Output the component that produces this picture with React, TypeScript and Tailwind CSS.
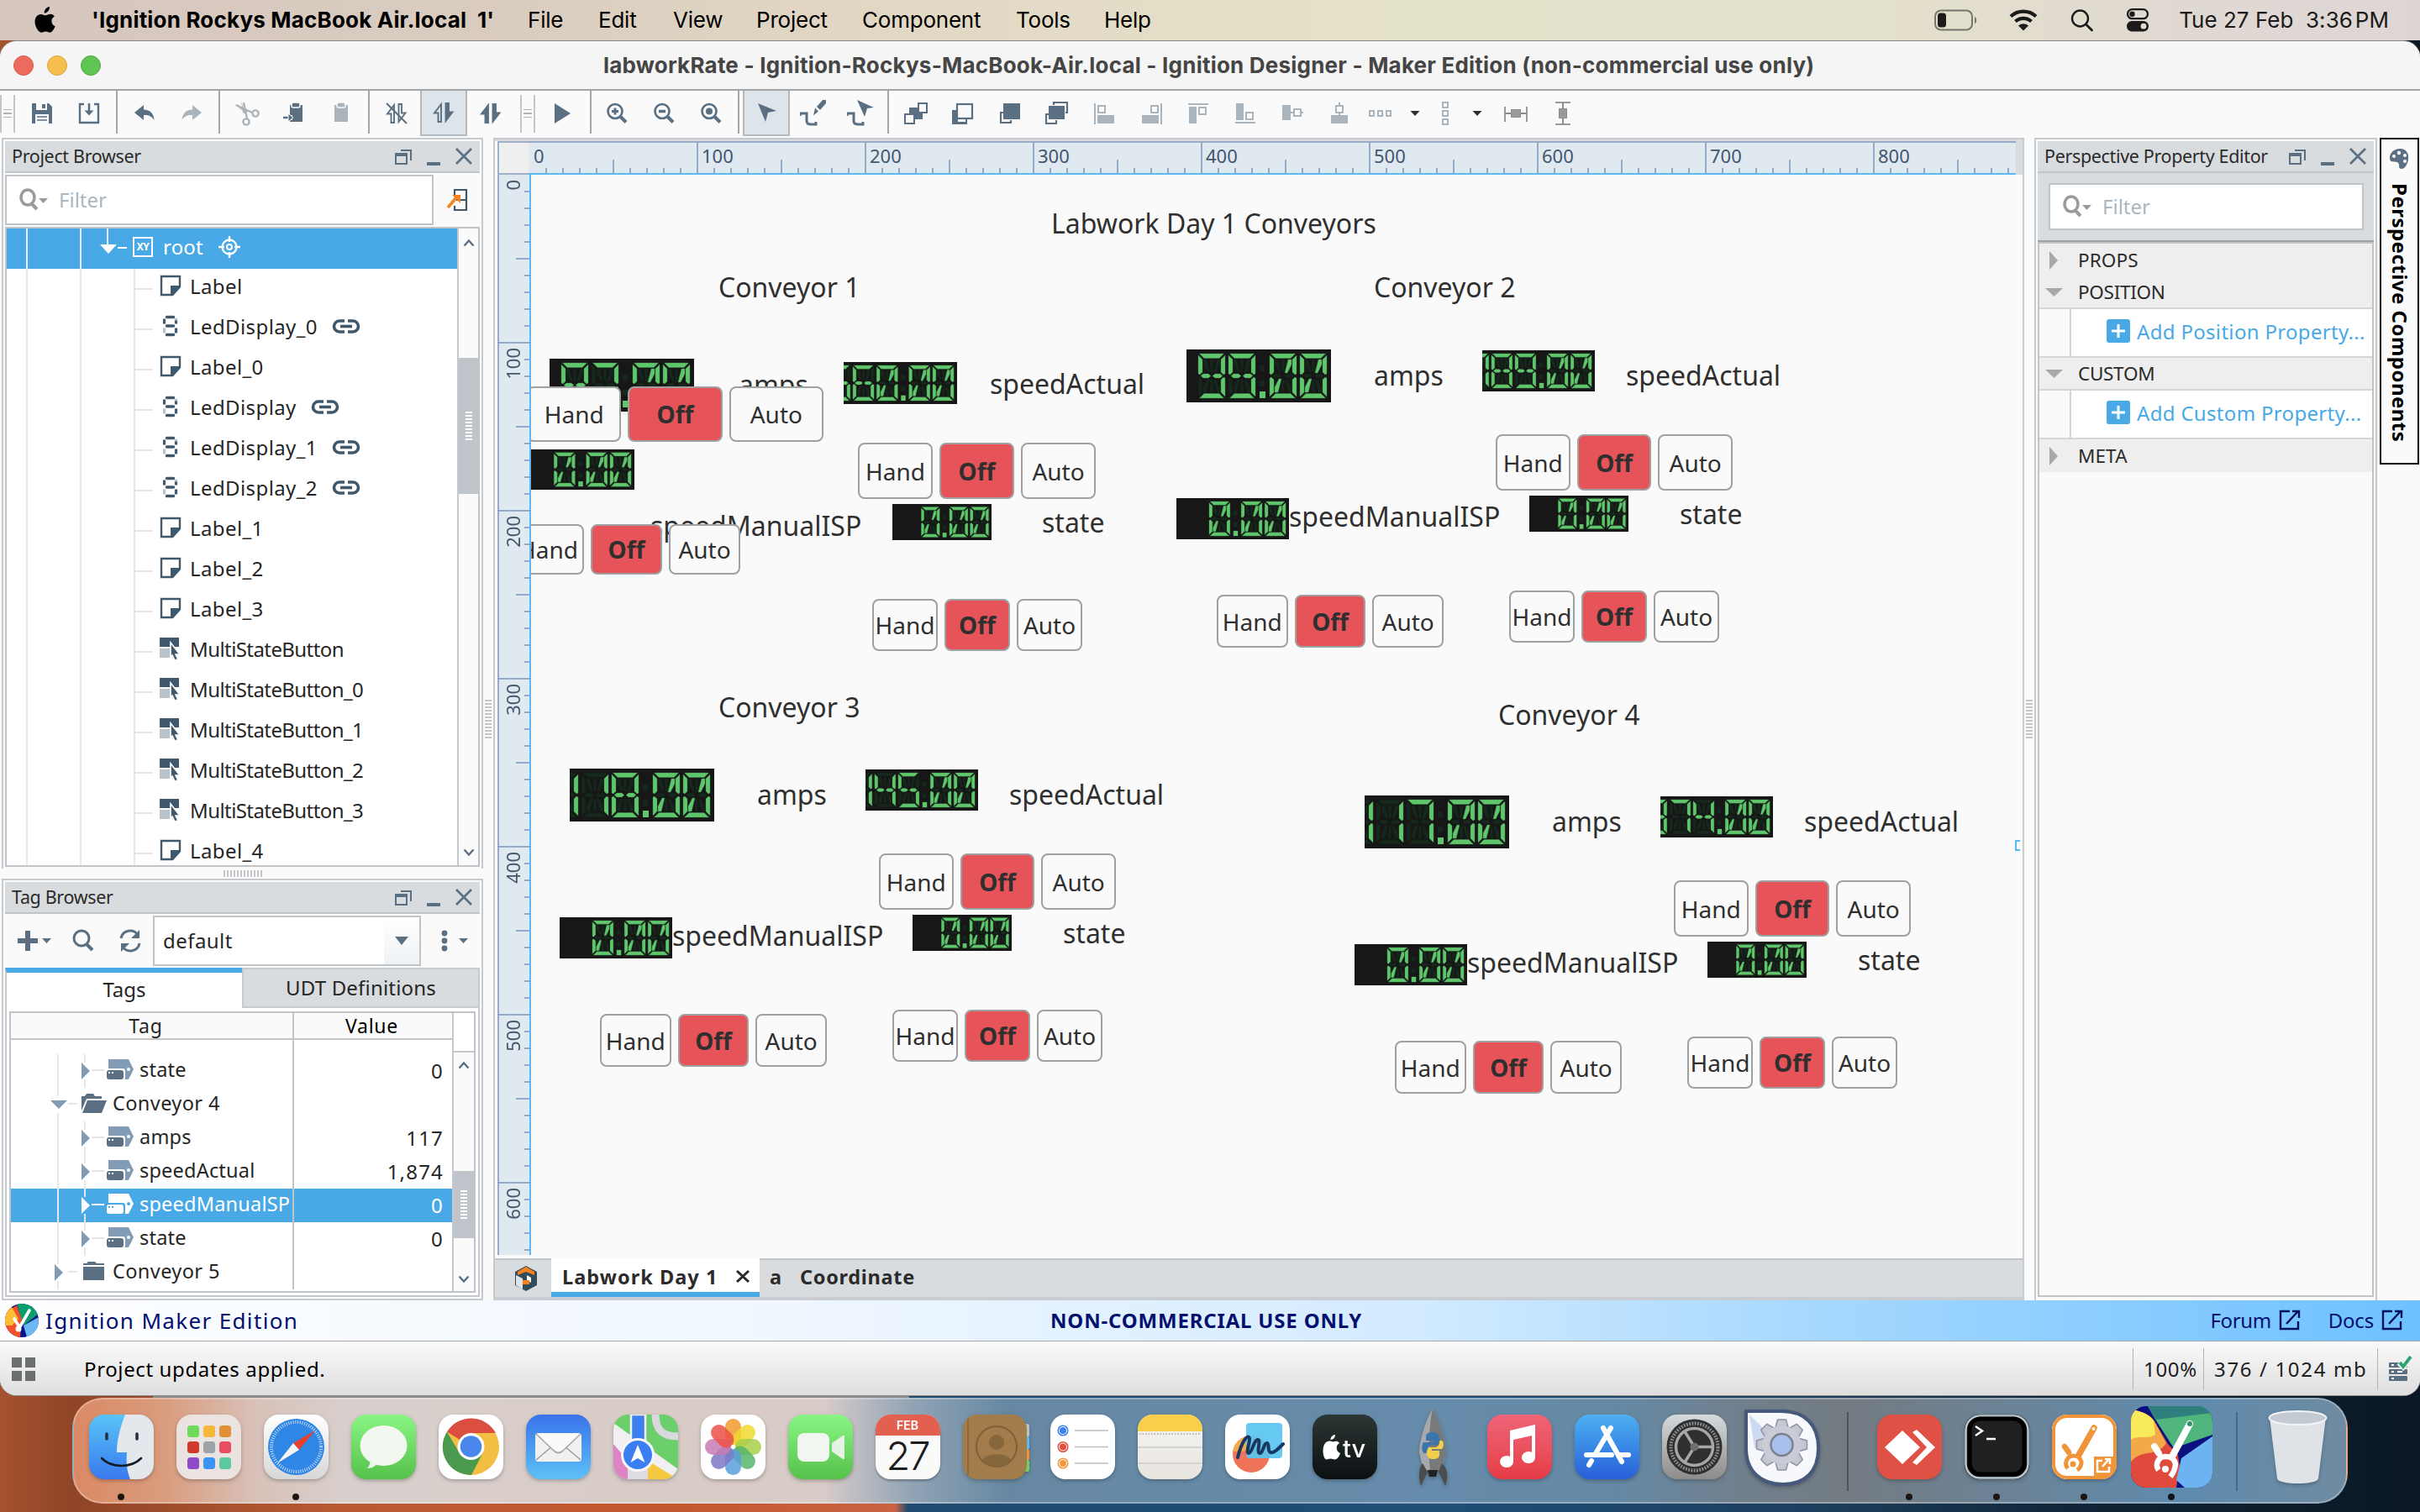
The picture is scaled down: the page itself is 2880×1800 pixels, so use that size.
import React from "react";

type Kids = { children?: React.ReactNode };
const S = "#5a7082";
const D = "#a9b4bc";
const N = "#40586b";

function Ic({ w = 32, h = 32, c = "", children }: Kids & { w?: number; h?: number; c?: string }) {
  return (
    <svg width={w} height={h} viewBox={`0 0 ${w} ${h}`} className={"shrink-0 block " + c} fill="none">
      {children}
    </svg>
  );
}

/* ---------- menu bar ---------- */
function MenuBar() {
  return (
    <div className="flex h-[48px] shrink-0 items-center bg-[linear-gradient(90deg,#d6c7bf_0%,#d9ccbf_20%,#e1d7c3_35%,#e4dcc6_45%,#e4e1c8_55%,#e3e3cb_68%,#e3dfcc_80%,#dfd8d3_92%,#ddd6d4_100%)] font-[Inter,sans-serif] text-[26px] leading-[48px] tracking-[-0.220px] whitespace-nowrap text-black">
      <div className="flex w-[109px] shrink-0 justify-start pl-[40px]">
        <svg width="28" height="32" viewBox="0 0 28 32" fill="#000">
          <path d="M19 0c.3 2-.6 3.900-1.800 5.300-1.200 1.400-2.900 2.400-4.500 2.300-.3-1.900.6-3.900 1.700-5.100C15.600 1.100 17.500.1 19 0zM24.800 11.500c-2.400 1.500-3.500 3.300-3.400 5.700.1 2.900 1.700 4.900 4.200 6-.8 2.300-3.300 7.400-6.300 7.500-1.700 0-2.500-1.100-4.900-1.100s-3.300 1.100-4.900 1.100C5.500 30.800 1.500 23.500 1.500 17.800c0-5.800 3.700-8.900 7.200-8.900 2.200 0 4 1.400 5.600 1.400 1.500 0 3.600-1.600 6.200-1.500 1.600.1 3.300.9 4.300 2.700z" />
        </svg>
      </div>
      <div className="w-[519px] shrink-0 font-bold tracking-[0.180px]">'Ignition Rockys MacBook Air.local&nbsp; 1'</div>
      <div className="w-[84px] shrink-0">File</div>
      <div className="w-[89px] shrink-0">Edit</div>
      <div className="w-[99px] shrink-0">View</div>
      <div className="w-[126px] shrink-0">Project</div>
      <div className="w-[183px] shrink-0">Component</div>
      <div className="w-[105px] shrink-0">Tools</div>
      <div className="grow">Help</div>
      <svg width="542" height="48" viewBox="2300 0 542 48" className="absolute top-0 left-[2300px]" fill="none">
        <rect x="2303" y="12.500" width="44" height="23" rx="7" stroke="#77756d" strokeWidth="2" />
        <rect x="2306" y="15.500" width="10" height="17" rx="3.500" fill="#1b1b1b" />
        <path d="M2350 20c3 1 3 7 0 8z" fill="#77756d" />
        <path d="M2393 19.500a22 22 0 0 1 30 0M2398.500 25.500a14 14 0 0 1 19 0" stroke="#1b1b1b" strokeWidth="4.200" />
        <path d="M2402 30.500a9 9 0 0 1 12 0l-6 6z" fill="#1b1b1b" />
        <circle cx="2475.500" cy="22" r="9.500" stroke="#1b1b1b" strokeWidth="2.400" />
        <path d="M2482.500 29l7 7" stroke="#1b1b1b" strokeWidth="2.800" strokeLinecap="round" />
        <rect x="2532" y="11.200" width="24" height="11" rx="5.500" stroke="#1b1b1b" strokeWidth="2.300" />
        <circle cx="2537.500" cy="16.700" r="3.200" fill="#1b1b1b" />
        <rect x="2531" y="25" width="26" height="12.500" rx="6.200" fill="#1b1b1b" />
        <circle cx="2551" cy="31.200" r="3.400" fill="#e2dccf" />
      </svg>
      <div className="mr-[37px] tracking-[0.020px] text-[#1b1b1b]">Tue 27 Feb&nbsp; 3:36<span className="ml-[3px]">PM</span></div>
    </div>
  );
}

/* ---------- toolbar ---------- */
function Cell({ children, on }: Kids & { on?: boolean }) {
  return (
    <div className={"flex h-[54px] w-[56px] shrink-0 items-center justify-center " + (on ? "border-2 border-t-0 border-[#b3bbc2] bg-[#dde4ea]" : "")}>
      {children}
    </div>
  );
}
function Sep({ w = "w-[10px]" }: { w?: string }) {
  return (
    <div className={"flex h-[54px] shrink-0 pl-[4px] " + w}>
      <div className="h-[51px] w-[2px] bg-[#a5a6a7]" />
    </div>
  );
}
function Grip() {
  return (
    <div className="mr-[2px] flex h-[45px] w-[18px] items-center justify-center border-x-2 border-[#c3c7cb]">
      <div className="flex flex-col gap-[3px]">
        <i className="h-[1.500px] w-[10px] bg-[#b0b4b8]" />
        <i className="h-[1.500px] w-[10px] bg-[#b0b4b8]" />
        <i className="h-[1.500px] w-[10px] bg-[#b0b4b8]" />
      </div>
    </div>
  );
}
function Lens({ children }: Kids) {
  return (
    <Ic>
      <circle cx="14" cy="13.500" r="8.500" stroke={S} strokeWidth="2.600" />
      <path d="M20 19.500l7 7" stroke={S} strokeWidth="4" />
      {children}
    </Ic>
  );
}
function Arrows({ l, r, slash }: { l?: boolean; r?: boolean; slash?: boolean }) {
  return (
    <Ic>
      <path d="M13 6v21H9.500V16.500H5z" stroke={S} strokeWidth="1.900" fill={l ? S : "none"} />
      <path d="M18.500 26V5H22v10.500h4.500z" stroke={S} strokeWidth="1.900" fill={r ? S : "none"} />
      {slash && <path d="M4 4l24 24" stroke={S} strokeWidth="2" />}
    </Ic>
  );
}
function Caret({ w }: { w: string }) {
  return (
    <div className={"flex shrink-0 justify-center " + w}>
      <svg width="12" height="8" viewBox="0 0 12 8"><path d="M0.500 1h11L6 7z" fill="#2d2f31" /></svg>
    </div>
  );
}
const wire = "M4 17v-3h8v9q0 4 5 4h6v-3";
function Toolbar() {
  return (
    <div className="flex h-[56px] shrink-0 items-center border-t-2 border-[#9ea5aa] bg-[#fafafa]">
      <div className="flex w-[22px] shrink-0"><Grip /></div>
      <Cell><Ic><path d="M4 4h20l4 4v20H4z" fill={S} /><rect x="9" y="4" width="13" height="8" fill="#fafafa" /><rect x="16" y="5" width="4" height="5" fill={S} /><rect x="8" y="17" width="16" height="11" fill="#fafafa" /><path d="M10 20h12M10 24h12" stroke={S} strokeWidth="1.500" /></Ic></Cell>
      <Cell><Ic><path d="M10 5H5v22h22V5h-5" stroke={S} strokeWidth="2.400" /><path d="M16 4v12" stroke={S} strokeWidth="2.600" /><path d="M10.500 12.500h11L16 18.500z" fill={S} /></Ic></Cell>
      <Sep />
      <Cell><Ic><path d="M4 15L15 6v5.500c8 0 12 5 12.500 12.500-3-5-7-6.500-12.500-6v6z" fill={S} /></Ic></Cell>
      <Cell><Ic><path d="M28 15L17 6v5.500C9 11.500 5 16.500 4.500 24c3-5 7-6.500 12.500-6v6z" fill={D} /></Ic></Cell>
      <Sep />
      <Cell><Ic><g stroke={D} strokeWidth="2.400"><circle cx="15" cy="26" r="3.600" /><circle cx="26" cy="16" r="3.600" /><path d="M16 22L12 3M22 15L3 6" /></g><path d="M9 1l5 16-3-2zM1 5l16 7-2 4z" fill={D} /></Ic></Cell>
      <Cell><Ic><path d="M11 6h15v20H11z" fill={S} /><rect x="13" y="3" width="10" height="6" rx="2" fill={S} stroke="#fafafa" strokeWidth="1.500" /><path d="M3 21h11" stroke="#fafafa" strokeWidth="6" /><path d="M3 21h8" stroke={S} strokeWidth="2.400" /><path d="M9 16l6 5-6 5z" fill={S} stroke="#fafafa" /></Ic></Cell>
      <Cell><Ic><path d="M8 6h16v20H8z" fill={D} /><rect x="11" y="3" width="10" height="6" rx="2" fill={D} stroke="#fafafa" strokeWidth="1.500" /></Ic></Cell>
      <Sep />
      <Cell><Arrows slash /></Cell>
      <Cell on><Arrows r /></Cell>
      <Cell><Arrows l r /></Cell>
      <div className="flex w-[30px] justify-center pl-[4px]"><Grip /></div>
      <Cell><Ic><path d="M6 4l19 12L6 28z" fill={S} /></Ic></Cell>
      <Sep w="w-[8px]" />
      <Cell><Lens><path d="M14 9.500v8M10 13.500h8" stroke={S} strokeWidth="3" /></Lens></Cell>
      <Cell><Lens><path d="M10 13.500h8" stroke={S} strokeWidth="3.500" /></Lens></Cell>
      <Cell><Lens><circle cx="14" cy="13.500" r="4" fill={S} /></Lens></Cell>
      <Sep />
      <Cell on><Ic><path d="M6 5l22 9-10 2-3 11z" fill={S} /></Ic></Cell>
      <Cell><Ic><path d={wire} transform="translate(-4 2)" stroke={S} strokeWidth="3" /><path d="M20 8l7-8h4v4l-7 8zM18 9.500l4 4-6 5z" fill={S} /></Ic></Cell>
      <Cell><Ic><path d={wire} transform="translate(-4 2)" stroke={S} strokeWidth="3" /><path d="M12 0l20 9-8 1-3 10z" fill={S} /></Ic></Cell>
      <Sep />
      <Cell><Ic><rect x="8" y="9" width="16" height="14" fill={S} /><rect x="19" y="4" width="10" height="11" fill="#fafafa" stroke={S} strokeWidth="2" /><rect x="3" y="17" width="11" height="11" fill="#fafafa" stroke={S} strokeWidth="2" /></Ic></Cell>
      <Cell><Ic><path d="M4 12h6v14h10v2H4z" fill={S} /><rect x="9" y="5" width="18" height="17" fill="#fafafa" stroke={S} strokeWidth="2.200" /><path d="M4 12v16h16v-6" fill="none" stroke={S} strokeWidth="2" /></Ic></Cell>
      <Cell><Ic><path d="M8 15H5v12h12v-3" stroke={S} strokeWidth="2.200" /><rect x="8" y="4" width="20" height="19" fill={S} /></Ic></Cell>
      <Cell><Ic><path d="M12 6V3h16v12h-2M8 17H3v11h12v-4" stroke={S} strokeWidth="2.200" /><rect x="6" y="7" width="19" height="16" fill={S} /></Ic></Cell>
      <Cell><Ic><path d="M5 4v25" stroke={D} strokeWidth="2" /><rect x="9" y="7" width="8" height="8" stroke={D} strokeWidth="2" /><rect x="8" y="18" width="20" height="10" fill={D} /></Ic></Cell>
      <Cell><Ic><path d="M28 4v25" stroke={D} strokeWidth="2" /><rect x="16" y="7" width="8" height="8" stroke={D} strokeWidth="2" /><rect x="5" y="18" width="20" height="10" fill={D} /></Ic></Cell>
      <Cell><Ic><path d="M4 5h24" stroke={D} strokeWidth="2" /><rect x="5" y="8" width="9" height="20" fill={D} /><rect x="17" y="9" width="8" height="8" stroke={D} strokeWidth="2" /></Ic></Cell>
      <Cell><Ic><path d="M4 27h24" stroke={D} strokeWidth="2" /><rect x="5" y="4" width="9" height="20" fill={D} /><rect x="17" y="15" width="8" height="8" stroke={D} strokeWidth="2" /></Ic></Cell>
      <Cell><Ic><rect x="4" y="6" width="10" height="18" fill={D} /><rect x="18" y="11" width="8" height="8" stroke={D} strokeWidth="2" /><path d="M14 15h4M26 15h3" stroke={D} strokeWidth="2" /></Ic></Cell>
      <Cell><Ic><rect x="6" y="18" width="20" height="10" fill={D} /><rect x="12" y="7" width="8" height="8" stroke={D} strokeWidth="2" /><path d="M16 3v4M16 15v4" stroke={D} strokeWidth="2" /></Ic></Cell>
      <div className="flex w-[42px] justify-center"><Ic><g stroke={D} strokeWidth="2"><rect x="3" y="13" width="5" height="6" /><rect x="13" y="13" width="5" height="6" /><rect x="23" y="13" width="5" height="6" /></g></Ic></div>
      <Caret w="w-[40px]" />
      <div className="flex w-[32px] justify-center"><Ic><g stroke={D} strokeWidth="2"><rect x="13" y="3" width="6" height="6" /><rect x="13" y="13" width="6" height="6" /><rect x="13" y="23" width="6" height="6" /></g></Ic></div>
      <Caret w="w-[40px] pl-[4px]" />
      <Cell><Ic><path d="M3 8v18M29 8v18" stroke="#9a9a9a" strokeWidth="2" /><path d="M3 16h26" stroke="#8c8c8c" strokeWidth="2" /><rect x="10.500" y="11.500" width="11" height="9" fill="#9a9a9a" stroke="#8c8c8c" /></Ic></Cell>
      <Cell><Ic><path d="M7 3h18M7 29h18" stroke="#9a9a9a" strokeWidth="2" /><path d="M16 3v26" stroke="#8c8c8c" strokeWidth="2" /><rect x="11.500" y="10.500" width="9" height="11" fill="#9a9a9a" stroke="#8c8c8c" /></Ic></Cell>
    </div>
  );
}

/* ---------- shared panel parts ---------- */
function PanelTitle({ children }: Kids) {
  return (
    <div className="flex h-[38px] shrink-0 items-center border-b-2 border-[#c0c5c9] bg-[#d9dcde] pl-[8px] text-[21.500px] tracking-[-0.350px] whitespace-nowrap text-[#2b2b2b]">
      <span className="grow">{children}</span>
      <Ic w={104} h={32}>
        <g stroke={S} strokeWidth="2"><path d="M10 9h12v12" /><rect x="4" y="13" width="13" height="12" /></g>
        <path d="M4 14h13" stroke={S} strokeWidth="4" />
        <path d="M41 25h16" stroke={S} strokeWidth="4" />
        <path d="M76 7l18 18M94 7l-18 18" stroke={S} strokeWidth="2.600" />
      </Ic>
    </div>
  );
}
function FilterIcon() {
  return (
    <Ic w={40} h={32}>
      <ellipse cx="11" cy="13" rx="8" ry="9" stroke="#9b9b9b" strokeWidth="3.600" />
      <path d="M15 20l7 7" stroke="#9b9b9b" strokeWidth="4" />
      <path d="M24 14h11l-5.500 6z" fill="#9b9b9b" />
    </Ic>
  );
}
function ScrollArrow({ down }: { down?: boolean }) {
  return (
    <svg width="14" height="10" viewBox="0 0 14 10" fill="none" className="mx-auto block shrink-0">
      <path d={down ? "M1.500 1.500L7 7.500l5.500-6" : "M1.500 8.500L7 2.500l5.500 6"} stroke={S} strokeWidth="2.400" />
    </svg>
  );
}
function ThumbGrip() {
  return <div className="h-[35px] w-[8px] bg-[repeating-linear-gradient(180deg,#fff_0_2px,transparent_2px_4px)]" />;
}

/* ---------- project browser ---------- */
function NodeIcon({ k }: { k: string }) {
  if (k === "label")
    return <Ic w={26} h={26}><path d="M2 2h22v12L15 24H2z" stroke={N} strokeWidth="2.400" /><path d="M13 13h12v2l-9 10h-3z" fill={N} /></Ic>;
  if (k === "led")
    return (
      <Ic w={26} h={26}>
        <path d="M8.500 2.500h8M8.500 13h8M8.500 23.500h8" stroke={N} strokeWidth="3.600" strokeLinecap="round" />
        <path d="M5.500 4.500v6M19.500 4.500v6M19.500 15.500v6" stroke={N} strokeWidth="3.200" />
        <path d="M5.500 15.500v6M19.500 4.500v2" stroke="#b9c3cb" strokeWidth="3.200" />
      </Ic>
    );
  return (
    <Ic w={26} h={26}>
      <rect x="0" y="0" width="23" height="11" fill={N} /><rect x="0" y="13" width="16" height="11" fill="#b9c3cb" />
      <path d="M13 6l11 14h-5l3 6-4 1-3-6-2 3z" fill={N} stroke="#fff" strokeWidth="1.600" />
    </Ic>
  );
}
function LinkIcon() {
  return (
    <Ic w={34} h={20}>
      <path d="M15 3H9a6.500 6.500 0 0 0 0 13h6M19 3h6a6.500 6.500 0 0 1 0 13h-6" stroke={N} strokeWidth="3.600" />
      <path d="M10 9.500h14" stroke={N} strokeWidth="3.600" />
    </Ic>
  );
}
const nodes: [string, string, boolean?][] = [
  ["label", "Label"], ["led", "LedDisplay_0", true], ["label", "Label_0"], ["led", "LedDisplay", true],
  ["led", "LedDisplay_1", true], ["led", "LedDisplay_2", true], ["label", "Label_1"], ["label", "Label_2"],
  ["label", "Label_3"], ["btn", "MultiStateButton"], ["btn", "MultiStateButton_0"], ["btn", "MultiStateButton_1"],
  ["btn", "MultiStateButton_2"], ["btn", "MultiStateButton_3"], ["label", "Label_4"],
];
function ProjectBrowser() {
  return (
    <div className="flex h-[870px] flex-col border-2 border-b-0 border-[#c6cace] bg-[#fafafa] p-[2px] pb-0">
      <PanelTitle>Project Browser</PanelTitle>
      <div className="mt-[2px] flex h-[60px] shrink-0 items-center">
        <div className="flex h-[60px] w-[510px] items-center border-2 border-[#bfc4c8] bg-white pl-[14px] text-[24px] text-[#a9b7c1]">
          <FilterIcon /><span className="ml-[8px]">Filter</span>
        </div>
        <Ic w={34} h={32} c="ml-[16px]">
          <path d="M9 10V4h14v24H9v-5" stroke={N} strokeWidth="2.200" /><path d="M11 16h12" stroke={N} strokeWidth="2.200" />
          <path d="M1 25L12 12" stroke="#f58220" strokeWidth="3.600" /><path d="M6 10h10v10z" fill="#f58220" />
        </Ic>
      </div>
      <div className="mt-[2px] flex h-[762px] shrink-0 border-2 border-[#bfc4c8] bg-white">
        <div className="h-[758px] grow overflow-hidden">
          <div className="flex h-[48px] items-center bg-[#48a9e6] text-[24px] text-white">
            <svg width="150" height="48" viewBox="0 0 150 48" fill="none" className="shrink-0">
              <path d="M24 0v48M88 0v48M120 0v20" stroke="#e6f2fb" strokeWidth="2" /><path d="M111 19h20l-10 11z" fill="#fff" /><path d="M132 23h11" stroke="#fff" strokeWidth="2" />
            </svg>
            <div className="mb-[5px] flex h-[24px] w-[24px] items-center justify-center border-2 border-white text-[12px] font-bold tracking-[-0.500px]">XY</div>
            <span className="ml-[12px] w-[68px] pb-[5px] tracking-[0.200px]">root</span>
            <Ic w={26} h={26} c="mb-[5px] ml-[-2px]"><circle cx="13" cy="13" r="8.500" stroke="#fff" strokeWidth="2.400" /><circle cx="13" cy="13" r="3" stroke="#fff" strokeWidth="2" /><path d="M13 0v7M13 19v7M0 13h7M19 13h7" stroke="#fff" strokeWidth="2.400" /></Ic>
          </div>
          {nodes.map(([k, t, l]) => (
            <div key={t} className="flex h-[48px] items-center text-[24px] whitespace-nowrap text-[#262626]">
              <svg width="180" height="48" viewBox="0 0 180 48" fill="none" className="shrink-0">
                <path d="M24 0v48M88 0v48M152 0v48M152 24h22" stroke="#e3e6ea" strokeWidth="2" />
              </svg>
              <div className="mb-[8px] ml-[2px]"><NodeIcon k={k} /></div>
              <span className={"mb-[6px] ml-[10px] " + (k === "btn" ? "tracking-[-0.580px]" : "tracking-[0.400px]")}>{t}</span>
              {l && <div className="mb-[6px] ml-[17px]"><LinkIcon /></div>}
            </div>
          ))}
        </div>
        <div className="flex w-[25px] flex-col border-l-2 border-[#c4c9cd] bg-[#fafafa] pt-[12px]">
          <ScrollArrow />
          <div className="mt-[132px] flex h-[162px] items-center justify-center bg-[#bfc5ca]"><ThumbGrip /></div>
          <div className="grow" />
          <div className="pb-[10px]"><ScrollArrow down /></div>
        </div>
      </div>
    </div>
  );
}

/* ---------- tag browser ---------- */
function TagIcon({ sel }: { sel?: boolean }) {
  const a = sel ? "#fff" : "#829cb5";
  const b = sel ? "#fff" : "#5a7082";
  return (
    <Ic w={34} h={26}>
      <path d="M3 1h24l6 12-6 12H3z" fill={a} />
      <rect x="0" y="12" width="23" height="14" rx="3" fill={sel ? "#48a9e6" : "#fff"} />
      <rect x="1" y="14" width="20" height="11" rx="3" fill={b} />
      <path d="M3 17h2M7 17h2" stroke={sel ? "#48a9e6" : "#fff"} strokeWidth="2" />
      <circle cx="27" cy="13" r="2" fill={sel ? "#48a9e6" : "#fff"} />
    </Ic>
  );
}
const tags: [string, string, string, boolean?][] = [
  ["tag", "state", "0"], ["open", "Conveyor 4", ""], ["tag", "amps", "117"], ["tag", "speedActual", "1,874"],
  ["tag", "speedManualSP", "0", true], ["tag", "state", "0"], ["folder", "Conveyor 5", ""],
];
function TagBrowser() {
  return (
    <div className="flex h-[502px] flex-col border-2 border-[#c6cace] bg-[#fafafa] p-[2px]">
      <PanelTitle>Tag Browser</PanelTitle>
      <div className="flex h-[64px] shrink-0 items-center">
        <Ic w={60} h={32} c="ml-[13px]"><path d="M14 4v24M2 16h24" stroke={S} strokeWidth="6" /><path d="M31 13h11l-5.500 6z" fill={S} /></Ic>
        <Ic c="ml-[4px] w-[32px]"><circle cx="14" cy="13" r="9" stroke={S} strokeWidth="3" /><path d="M20 20l7 7" stroke={S} strokeWidth="4" /></Ic>
        <Ic c="ml-[24px]"><path d="M5 13A11 11 0 0 1 25 9M27 19A11 11 0 0 1 7 23" stroke={S} strokeWidth="3" /><path d="M27 3v10H17zM5 29V19h10z" fill={S} /></Ic>
        <div className="ml-[11px] flex h-[60px] w-[324px] items-center border-2 border-[#bfc4c8] bg-white text-[24px] text-[#262626]">
          <span className="grow pl-[10px] tracking-[0.450px]">default</span>
          <div className="flex h-full w-[42px] items-center justify-center bg-linear-to-b from-white to-[#eef2f5]"><svg width="18" height="12" viewBox="0 0 18 12"><path d="M1 1h16L9 11z" fill={S} /></svg></div>
        </div>
        <Ic w={50} h={32} c="ml-[20px]"><circle cx="8" cy="7" r="3.400" fill={S} /><circle cx="8" cy="16" r="3.400" fill={S} /><circle cx="8" cy="25" r="3.400" fill={S} /><path d="M25 13h11l-5.500 6z" fill={S} /></Ic>
      </div>
      <div className="flex h-[48px] shrink-0 text-[24px] text-[#262626]">
        <div className="flex w-[282px] items-center justify-center border-t-[6px] border-l-2 border-t-[#48a9e6] border-l-[#c6cace] bg-white pb-[3px]">Tags</div>
        <div className="flex grow items-center justify-center border-2 border-[#c6cace] bg-[#d9dcde] tracking-[0.200px]">UDT Definitions</div>
      </div>
      <div className="flex grow border-2 border-t-0 border-[#c6cace] bg-white p-[3px] pt-[4px]">
        <div className="flex grow border-2 border-[#bfc4c8] bg-white">
          <div className="grow">
            <div className="flex h-[32px] items-center border-b-2 border-[#bfc4c8] bg-[#fafafa] text-[23px] text-[#262626]">
              <div className="flex h-full w-[337px] items-center justify-center border-r-2 border-[#bfc4c8] pr-[14px] tracking-[0.800px]">Tag</div>
              <div className="flex grow justify-center pr-[3px] tracking-[0.700px] text-black">Value</div>
            </div>
            <div className="flex h-[17px]"><div className="w-[337px] border-r-2 border-[#bfc4c8]" /></div>
            {tags.map(([k, t, v, sel], i) => (
              <div key={i} className={"flex h-[40px] overflow-hidden text-[23.500px] whitespace-nowrap " + (sel ? "bg-[#48a9e6] text-white" : "text-[#262626]")}>
                <div className="flex w-[337px] shrink-0 items-center border-r-2 border-[#bfc4c8]">
                  {k === "tag" ? (
                    <Ic w={112} h={40}><path d={"M56 0v40" + "M88 0v10M88 30v10"} stroke="#e3e6ea" strokeWidth="2" /><path d="M84 10l10 10-10 10z" fill={sel ? "#fff" : "#829cb5"} /><path d="M96 19h15" stroke={sel ? "#fff" : "#e3e6ea"} strokeWidth="2" /></Ic>
                  ) : (
                    <Ic w={80} h={40}>
                      <path d="M56 0v10M56 30v10M68 19h11" stroke="#e3e6ea" strokeWidth="2" />
                      {k === "open" ? <path d="M47 15h20l-10 10z" fill="#829cb5" /> : <path d="M52 10l10 10-10 10z" fill="#829cb5" />}
                    </Ic>
                  )}
                  {k === "tag" && <div className="ml-[1px] pb-[4px]"><TagIcon sel={sel} /></div>}
                  {k === "open" && <div className="ml-[4px] pb-[2px]"><Ic w={30} h={24}><path d="M0 20V3h4l2-3h8l2 3h8v3H6z" fill={S} /><path d="M7 8h23l-6 15H1z" fill={S} /></Ic></div>}
                  {k === "folder" && <div className="ml-[6px] pb-[2px]"><Ic w={28} h={24}><path d="M0 4V2h4l2-2h8l2 2h9v2zM0 6h25v16H0z" fill={S} /></Ic></div>}
                  <span className={"pb-[2px] " + (k === "tag" ? "ml-[6px] tracking-[0.200px]" : "ml-[7px] tracking-[0.400px]")}>{t}</span>
                </div>
                <div className="flex grow items-center justify-end pr-[10px] text-[24px] tracking-[1.200px]">{v}</div>
              </div>
            ))}
          </div>
          <div className="flex w-[26px] shrink-0 flex-col border-l-2 border-[#c4c9cd] bg-white">
            <div className="h-[47px] shrink-0 border-b-2 border-[#c4c9cd]" />
            <div className="flex grow flex-col bg-[#fafafa] pt-[10px]">
              <ScrollArrow />
              <div className="mt-[121px] flex h-[80px] items-center justify-center bg-[#bfc5ca]"><ThumbGrip /></div>
              <div className="grow" />
              <div className="pb-[9px]"><ScrollArrow down /></div>
            </div>
          </div>
        </div>
      </div>
    </div>
  );
}

/* ---------- fourteen segment display ---------- */
const segs: Record<string, string> = {
  a: "1.500,0 30.500,0 25,5.500 7,5.500",
  d: "7,47.500 25,47.500 30.500,53 1.500,53",
  f: "0,2 5,7 5,22 2,25 0,24",
  e: "0,29 2,28 5,31 5,46 0,51",
  b: "32,2 27,7 27,22 30,25 32,24",
  c: "32,29 30,28 27,31 27,46 32,51",
  g: "3,26.500 6,24 12,24 15,26.500 12,29 6,29",
  h: "17,26.500 20,24 26,24 29,26.500 26,29 20,29",
  k: "26,7 26,13 21,23 18,23 22,7",
  m: "6,46 6,40 11,30 14,30 10,46",
  i: "6,7 10,7 14,22 11,22 6,13",
  j: "26,46 22,46 18,31 21,31 26,40",
  u: "14,7 18,7 17.500,22 14.500,22",
  v: "14.500,31 17.500,31 18,46 14,46",
};
const glyph: Record<string, string> = {
  "0": "abcdefkm", "1": "bc", "4": "fghbc", "5": "afghcd", "6": "afghcde", "7": "abc", "8": "abcdefgh", "9": "abcdfgh",
};
function Led({ x, y, w, h, v }: { x: number; y: number; w: number; h: number; v: string }) {
  const xs = [135, 99, 50, 14, -22];
  const ds = v.replace(".", "").split("").reverse().slice(0, 5);
  return (
    <svg className="absolute" style={{ left: x - 632, top: y - 208 }} width={w} height={h} viewBox="0 0 172 63" preserveAspectRatio="none">
      <rect width="172" height="63" fill="#171717" />
      {ds.map((d, i) => (
        <g key={i} transform={`translate(${xs[i]} 5)`}>
          {Object.keys(segs).map((s) => (
            <polygon key={s} points={segs[s]} fill={glyph[d].includes(s) ? "#5fc66c" : "#15281b"} stroke={glyph[d].includes(s) ? "#3f8a4b" : "#171717"} strokeWidth="0.400" />
          ))}
        </g>
      ))}
      <rect x="87" y="19" width="6" height="7" fill="#15281b" />
      <rect x="87" y="37" width="6" height="7" fill="#15281b" />
      <rect x="87" y="50" width="7" height="8" fill="#5fc66c" />
    </svg>
  );
}
function Group({ x, y, w, h }: { x: number; y: number; w: number; h: number }) {
  return (
    <div className="absolute flex gap-[8px] text-[28px]" style={{ left: x - 632, top: y - 208, width: w, height: h }}>
      {["Hand", "Off", "Auto"].map((t) => (
        <div key={t} className={"flex min-w-0 flex-1 basis-0 items-center justify-center rounded-[8px] border-2 border-[#a0a0a0] text-[#2f2f2f] " + (t === "Off" ? "bg-[#e65358] font-bold" : "bg-[#fafafa]")}>
          <span className="shrink-0">{t}</span>
        </div>
      ))}
    </div>
  );
}
function Txt({ x, y, t }: { x: number; y: number; t: string }) {
  return (
    <div className="absolute text-[32px] leading-[40px] whitespace-nowrap text-[#2f2f2f]" style={{ left: x - 632, top: y - 208 - 21 }}>{t}</div>
  );
}
function Conveyor({ dx, dy, amps, speed }: { dx: number; dy: number; amps: string; speed: string }) {
  return (
    <>
      <Led x={1412 + dx} y={416 + dy} w={172} h={63} v={amps} />
      <Txt x={1635 + dx} y={448 + dy} t="amps" />
      <Led x={1764 + dx} y={417 + dy} w={134} h={49} v={speed} />
      <Txt x={1935 + dx} y={448 + dy} t="speedActual" />
      <Led x={1400 + dx} y={593 + dy} w={134} h={49} v="0.00" />
      <Txt x={1534 + dx} y={616 + dy} t="speedManualISP" />
      <Led x={1820 + dx} y={590 + dy} w={118} h={43} v="0.00" />
      <Txt x={1999 + dx} y={613 + dy} t="state" />
      <Group x={1780 + dx} y={517 + dy} w={282} h={67} />
      <Group x={1448 + dx} y={708 + dy} w={270} h={63} />
      <Group x={1796 + dx} y={703 + dy} w={250} h={62} />
    </>
  );
}

/* ---------- designer canvas ---------- */
function tickH(i: number) {
  return i % 10 === 0 ? "h-[36px]" : i % 5 === 0 ? "h-[16px]" : "h-[6px]";
}
function tickW(i: number) {
  return i % 10 === 0 ? "w-[36px]" : i % 5 === 0 ? "w-[16px]" : "w-[6px]";
}
function CanvasPanel() {
  return (
    <div className="flex w-[1822px] shrink-0 flex-col border-2 border-b-0 border-[#c6cace] bg-[#d9dcde]">
      <div className="flex h-[1332px] flex-col bg-[#fafafa]">
        <div className="flex h-[42px] shrink-0 border-t-2 border-[#d9dcde]">
          <div className="ml-[3px] h-[40px] w-[37px] shrink-0 border-2 border-r-0 border-[#9fb0ca] bg-[#efefef]" />
          <div className="flex h-[40px] w-[1772px] items-end overflow-hidden border-t-2 border-b-2 border-t-[#9aabc8] border-b-[#5cb8f5] bg-[#e0e8f0]">
            {Array.from({ length: 89 }, (_, i) => (
              <div key={i} className="relative flex h-[36px] w-[20px] shrink-0 items-end">
                {i > 0 && <i className={"w-[2px] bg-[#93abc9] " + tickH(i)} />}
                {i % 10 === 0 && <span className="absolute top-[-3px] left-[6px] text-[22px] leading-[36px] text-[#43566e]">{i * 10}</span>}
              </div>
            ))}
          </div>
          <div className="w-[8px] bg-[#d9dcde]" />
        </div>
        <div className="flex h-[1286px]">
          <div className="ml-[3px] flex w-[40px] shrink-0 flex-col items-end overflow-hidden border-r-2 border-l-2 border-r-[#5cb8f5] border-l-[#9aabc8] bg-[#e0e8f0]">
            {Array.from({ length: 65 }, (_, i) => (
              <div key={i} className="relative flex h-[20px] w-[36px] shrink-0 justify-end">
                {i > 0 && <i className={"mt-[-1px] h-[2px] bg-[#93abc9] " + tickW(i)} />}
                {i % 10 === 0 && <span className="absolute top-[6px] left-[2px] rotate-180 text-[22px] leading-[28px] text-[#43566e] [writing-mode:vertical-rl]">{i * 10}</span>}
              </div>
            ))}
          </div>
          <div className="relative grow overflow-hidden bg-[#fafafa]">
            <Txt x={1251} y={267} t="Labwork Day 1 Conveyors" />
            <Txt x={855} y={343} t="Conveyor 1" />
            <Txt x={1635} y={343} t="Conveyor 2" />
            <Txt x={855} y={843} t="Conveyor 3" />
            <Txt x={1783} y={852} t="Conveyor 4" />
            <Led x={654} y={427} w={172} h={63} v="97.00" />
            <Txt x={879} y={459} t="amps" />
            <Led x={1004} y={431} w={135} h={50} v="1560.00" />
            <Txt x={1178} y={458} t="speedActual" />
            <Led x={620} y={535} w={135} h={48} v="0.00" />
            <Txt x={774} y={627} t="speedManualISP" />
            <Led x={1062} y={600} w={118} h={43} v="0.00" />
            <Txt x={1240} y={623} t="state" />
            <Group x={627} y={460} w={353} h={66} />
            <Group x={1021} y={527} w={283} h={67} />
            <Group x={610} y={624} w={271} h={60} />
            <Group x={1038} y={713} w={250} h={62} />
            <Conveyor dx={0} dy={0} amps="99.00" speed="1789.00" />
            <Conveyor dx={-734} dy={499} amps="118.00" speed="1145.00" />
            <Conveyor dx={212} dy={531} amps="117.00" speed="1874.00" />
            <div className="absolute top-[792px] left-[1766px] h-[13px] w-[8px] border-2 border-r-0 border-[#5cb8f5]" />
          </div>
          <div className="w-[3px] bg-[#fafafa]" />
        </div>
      </div>
      <div className="flex h-[46px] shrink-0 items-stretch bg-[#d9dcde] text-[23.500px] font-bold whitespace-nowrap text-[#2b2b2b]">
        <div className="flex w-[67px] items-center justify-center border-t-2 border-[#c0c5c9] pl-[6px]">
          <Ic><path d="M16 1l13 7v16l-13 7-13-7V8z" fill="#344b5c" /><path d="M4 12l8 4v13l-8-5z" fill="#dfe3e6" /><path d="M6 8l10-6 10 6v4l-10-4-10 4z" fill="#f5821f" /><path d="M17 12l5 3v6l-5-3z" fill="#fff" /><rect x="12" y="18" width="8" height="5" fill="#f5821f" /></Ic>
        </div>
        <div className="flex w-[248px] items-center border-b-[6px] border-[#48a9e6] bg-white pt-[5px] pl-[13px]">
          <span className="w-[206px] tracking-[1.050px]">Labwork Day 1</span>
          <Ic w={20} h={20}><path d="M2 2l14 13M16 2L2 15" stroke="#2b2b2b" strokeWidth="3" /></Ic>
        </div>
        <div className="flex grow items-center border-t-2 border-[#c0c5c9] pb-[3px] pl-[12px]">
          <span className="w-[36px]">a</span>
          <span className="tracking-[0.700px]">Coordinate</span>
        </div>
      </div>
      <div className="h-[4px] bg-[#c9cdd1]" />
    </div>
  );
}

/* ---------- property editor ---------- */
function Tri({ open }: { open?: boolean }) {
  return (
    <svg width="46" height="24" viewBox="0 0 46 24" className="shrink-0">
      <path d={open ? "M7 7h21L17.500 17z" : "M12 1l10 11-10 11z"} fill="#a8a8a8" />
    </svg>
  );
}
function Sect({ t, open, line }: { t: string; open?: boolean; line?: boolean }) {
  return (
    <div className={"flex h-[39px] shrink-0 items-center bg-[#eeeeee] text-[22.500px] text-[#2b2b2b] " + (line ? "border-b-2 border-[#d3d6d9] tracking-[-0.300px]" : "tracking-[0.100px]")}>
      <Tri open={open} /><span>{t}</span>
    </div>
  );
}
function AddRow({ t }: { t: string }) {
  return (
    <div className="flex h-[58px] shrink-0 items-center border-b-2 border-[#d3d6d9] bg-white text-[24px] tracking-[0.320px] whitespace-nowrap text-[#48a9e6]">
      <div className="h-full w-[38px] shrink-0 border-r-2 border-[#d3d6d9] bg-[#fafafa]" />
      <div className="mb-[4px] ml-[42px] flex h-[28px] w-[28px] shrink-0 items-center justify-center rounded-[3px] bg-[#48a9e6]"><Ic w={16} h={16}><path d="M8 0v16M0 8h16" stroke="#fff" strokeWidth="3" /></Ic></div>
      <span className="mb-[3px] ml-[8px]">{t}</span>
    </div>
  );
}
function PropertyEditor() {
  return (
    <div className="flex w-[408px] shrink-0 flex-col border-2 border-b-0 border-[#c6cace] bg-[#fafafa] px-[2px] pt-[2px] pb-[4px]">
      <PanelTitle>Perspective Property Editor</PanelTitle>
      <div className="flex h-[82px] shrink-0 items-center border-b-2 border-[#9ba1a6] bg-[#d9dcde] pl-[13px]">
        <div className="flex h-[56px] w-[375px] items-center border-2 border-[#bfc4c8] bg-white pl-[14px] text-[24px] text-[#a9b7c1]"><FilterIcon /><span className="ml-[8px]">Filter</span></div>
      </div>
      <div className="flex grow flex-col border-2 border-[#c0c5c9]">
        <Sect t="PROPS" />
        <Sect t="POSITION" open line />
        <AddRow t="Add Position Property..." />
        <Sect t="CUSTOM" open line />
        <AddRow t="Add Custom Property..." />
        <Sect t="META" />
      </div>
    </div>
  );
}

/* ---------- ignition logo ---------- */
function Logo() {
  return (
    <Ic w={40} h={40} c="rounded-full">
      <rect width="40" height="40" fill="#08128a" />
      <path d="M0 10L14 2l6 16-2 22H0z" fill="#f4502a" /><path d="M0 8l8-4 8 14-8 8H0z" fill="#fbbf35" />
      <path d="M14 0h20l6 12-18 14z" fill="#0ba06b" /><path d="M22 26l18-10v24H26z" fill="#6cb8f4" />
      <path d="M29 8L18 27M11 18l5 8" stroke="#fff" strokeWidth="3.600" strokeLinecap="round" /><circle cx="16" cy="30" r="3.500" fill="#fff" />
    </Ic>
  );
}
function Ext() {
  return <Ic w={26} h={26}><path d="M13 2H2v21h21V14" stroke="#03105c" strokeWidth="2.400" /><path d="M9 17L22 3M16 2h8v8" stroke="#03105c" strokeWidth="2.400" /></Ic>;
}

function Window() {
  return (
    <div className="flex h-[1612px] w-[2880px] shrink-0 flex-col overflow-hidden rounded-[20px] bg-[#fafafa] font-['Noto_Sans','Open_Sans',sans-serif] shadow-[0_0_0_1px_#8a8683]">
      <div className="flex h-[57px] shrink-0 items-center bg-[#f5f5f5] pl-[16px]">
        <div className="flex w-[702px] gap-[16px]">
          <i className="h-[24px] w-[24px] rounded-full border border-[#d8574c] bg-[#ed6a5e]" />
          <i className="h-[24px] w-[24px] rounded-full border border-[#dca43c] bg-[#f5bf4f]" />
          <i className="h-[24px] w-[24px] rounded-full border border-[#51a73e] bg-[#61c554]" />
        </div>
        <div className="font-[Inter,sans-serif] text-[26px] font-bold tracking-[0.210px] whitespace-nowrap text-[#454545]">labworkRate - Ignition-Rockys-MacBook-Air.local - Ignition Designer - Maker Edition (non-commercial use only)</div>
      </div>
      <Toolbar />
      <div className="flex h-[1386px] shrink-0 pt-[2px] pl-[2px]">
        <div className="flex w-[573px] shrink-0 flex-col">
          <ProjectBrowser />
          <div className="flex h-[12px] items-center justify-center"><div className="h-[8px] w-[46px] bg-[repeating-linear-gradient(90deg,#c4c7ca_0_2px,transparent_2px_4px)]" /></div>
          <TagBrowser />
        </div>
        <div className="flex w-[12px] shrink-0 items-center justify-center"><div className="h-[47px] w-[8px] bg-[repeating-linear-gradient(180deg,#c4c7ca_0_2px,transparent_2px_4px)]" /></div>
        <CanvasPanel />
        <div className="flex w-[12px] shrink-0 items-center justify-center"><div className="h-[47px] w-[8px] bg-[repeating-linear-gradient(180deg,#c4c7ca_0_2px,transparent_2px_4px)]" /></div>
        <PropertyEditor />
        <div className="ml-[3px] flex grow flex-col">
          <div className="mr-px flex h-[389px] flex-col items-center border-2 border-black bg-[#fafafa] pt-[7px]">
            <Ic><path d="M16 4c8 0 11 6 10 13-1 6-4 11-8 11-5 0-1-6-5-8-4-1-9 1-9-5C4 9 9 4 16 4z" fill={S} /><circle cx="15" cy="9" r="2.200" fill="#fafafa" /><circle cx="22" cy="12" r="2" fill="#fafafa" /><circle cx="22" cy="19" r="2" fill="#fafafa" /><circle cx="9" cy="13" r="2" fill="#fafafa" /></Ic>
            <span className="mt-[13px] text-[24px] leading-[32px] font-bold tracking-[0.480px] text-black [writing-mode:vertical-rl]">Perspective Components</span>
          </div>
        </div>
      </div>
      <div className="flex h-[49px] shrink-0 items-center border-b border-[#a8a8a8] bg-[linear-gradient(90deg,#fdfeff_0%,#eef6ff_35%,#d3ebff_58%,#a6d8ff_75%,#6dc1ff_100%)] pl-[6px] text-[24px] whitespace-nowrap text-[#03106e]">
        <Logo />
        <span className="ml-[8px] w-[1196px] text-[26px] tracking-[1.350px]">Ignition Maker Edition</span>
        <span className="grow font-bold tracking-[0.820px]">NON-COMMERCIAL USE ONLY</span>
        <span className="mr-[9px] tracking-[-0.400px]">Forum</span><Ext />
        <span className="mr-[9px] ml-[33px] tracking-[-0.200px]">Docs</span><Ext />
        <div className="w-[20px]" />
      </div>
      <div className="flex grow items-center bg-linear-to-b from-[#fafafa] to-[#dedede] pt-[2px] text-[24px] whitespace-nowrap text-black">
        <svg width="100" height="30" viewBox="0 0 100 30" className="shrink-0"><path d="M14 1h12v12H14zM30 1h12v12H30zM14 17h12v12H14zM30 17h12v12H30z" fill="#6c6f70" /></svg>
        <span className="grow tracking-[0.620px]">Project updates applied.</span>
        <div className="flex h-[50px] items-center border-l-[1.500px] border-[#b3b3b3] pl-[12px] text-[#1e1e1e]"><span className="w-[71px] tracking-[0.700px]">100%</span></div>
        <div className="flex h-[50px] items-center border-l-[1.500px] border-[#b3b3b3] pl-[12px] text-[#1e1e1e]"><span className="w-[194px] tracking-[1.650px]">376 / 1024 mb</span></div>
        <div className="flex h-[50px] w-[51px] items-center justify-center border-l-[1.500px] border-[#b3b3b3]">
          <Ic><rect x="4" y="8" width="22" height="6" rx="1" fill={S} /><rect x="4" y="16" width="22" height="6" rx="1" fill={S} /><rect x="4" y="24" width="22" height="6" rx="1" fill={S} /><path d="M7 11h3M7 19h3M14 19h6M7 27h3" stroke="#fff" strokeWidth="2" /><path d="M16 8l5 5L30 1" stroke="#f0f0f0" strokeWidth="7" /><path d="M17 8l4 5 9-12" stroke="#28a572" strokeWidth="3.800" /></Ic>
        </div>
      </div>
    </div>
  );
}

/* ---------- dock ---------- */
function App77({ children, bg, dot, id }: Kids & { bg?: string; dot?: boolean; id?: string }) {
  return (
    <div className="flex w-[104px] shrink-0 flex-col items-center">
      <svg width="77" height="77" viewBox="0 0 77 77" fill="none" className={"drop-shadow-[0_2px_2px_rgba(0,0,0,0.25)] " + (bg ? "rounded-[18px] " + bg : "overflow-visible")} data-app={id}>
        {children}
      </svg>
      <i className={"mt-[17px] h-[8px] w-[8px] rounded-full " + (dot ? "bg-[#1d1512]" : "")} />
    </div>
  );
}
const petals = ["#f39a2e", "#f0d92f", "#a6cf4a", "#56b56b", "#5a9fdb", "#7c78c4", "#c77bb0", "#ea5148"];
const teeth = Array.from({ length: 8 }, (_, i) => i * 45);
function Dock() {
  return (
    <div className="ml-[86px] flex h-[126px] w-[2708px] shrink-0 items-start self-start rounded-[36px] border-2 border-white/30 bg-[linear-gradient(90deg,#da8a64_0%,#d99c7e_4%,#d8c1b8_8%,#d8cfcc_12%,#d9cbc6_30%,#d8cbc8_33%,#8fa3b4_37%,#6788a3_41%,#668cab_60%,#6589a4_68%,#70808e_73%,#737b82_78%,#6a8499_86%,#5f8bae_93%,#6f8ba1_100%)] pt-[18px] pl-[4px]">
      <App77 dot bg="bg-linear-to-b from-[#5ac4f7] to-[#3b78ee]">
        <path d="M43 0C36 18 33 32 33 45h12c-1 12 0 22 4 32h28V0z" fill="#e4e7ec" />
        <path d="M21 23v6M57 23v6" stroke="#25313f" strokeWidth="3.600" strokeLinecap="round" /><path d="M15 52c12 12 35 12 47 0" stroke="#141c26" strokeWidth="2.600" strokeLinecap="round" />
      </App77>
      <App77 bg="bg-[#eae3df]">
        {["#6fd95a", "#f5b83a", "#e28f35", "#d03a2c", "#9ba3a8", "#ea4c62", "#8f49c9", "#3b93f2", "#5cc9a0"].map((c, i) => (
          <rect key={c} x={13 + (i % 3) * 19} y={13 + Math.floor(i / 3) * 19} width="14" height="14" rx="3.500" fill={c} />
        ))}
      </App77>
      <App77 dot bg="bg-linear-to-b from-white to-[#d8d8d8]">
        <circle cx="38.500" cy="38.500" r="33.500" fill="#2f86e4" /><circle cx="38.500" cy="38.500" r="29.500" stroke="#cfe5fb" strokeWidth="4" strokeDasharray="0.900 1.800" />
        <path d="M61 19L35 34l7 8z" fill="#e8402f" /><path d="M16 58l19-24 7 8z" fill="#f5f5f5" />
      </App77>
      <App77 bg="bg-linear-to-b from-[#8af584] to-[#55c24a]">
        <ellipse cx="38.500" cy="37" rx="28" ry="24" fill="#f2f8f0" /><path d="M22 54c1 5-1 8-3 10 6 0 10-3 12-6z" fill="#eef5ec" />
      </App77>
      <App77 bg="bg-white">
        <circle cx="38.500" cy="38.500" r="33.500" fill="#f3bf42" /><path d="M38.500 38.500L10 20.500A33.500 33.500 0 0 1 68 22H38.500z" fill="#da4f40" />
        <path d="M10 20.500A33.500 33.500 0 0 0 39 72l13-25-27-1z" fill="#4b9a50" /><circle cx="38.500" cy="38" r="16" fill="#fff" /><circle cx="38.500" cy="38" r="12.800" fill="#4a86ec" />
      </App77>
      <App77 bg="bg-linear-to-b from-[#3b72ea] to-[#5fc0f6]">
        <rect x="11" y="22" width="55" height="34" rx="3.500" fill="#f1f1ef" /><path d="M12 54l20-17M65 54L45 37" stroke="#9c9c9a" strokeWidth="1.500" /><path d="M12 23l21 20q5.500 5 11 0l21-20" stroke="#a9a9a7" strokeWidth="1.700" fill="#fafaf9" />
      </App77>
      <App77 bg="bg-[#6bcf6b]">
        <path d="M0 10l77 55v12H0z" fill="#f0f0f2" /><path d="M0 35l17 20v22H0z" fill="#de84c5" /><path d="M41 77V55l36 22z" fill="#f4c93f" /><path d="M21 0h17v77H21z" fill="#3f7ff0" stroke="#f0f0f2" strokeWidth="2.500" />
        <path d="M50 0c0 18 8 26 27 26" stroke="#d8d9dc" strokeWidth="9" /><path d="M17 60h24v17H17z" fill="#dcdce2" /><circle cx="29" cy="48" r="18.500" fill="#3b7ef2" stroke="#f7f7f7" strokeWidth="3" /><path d="M29 36l8.500 21L29 52l-8.500 5z" fill="#fff" />
      </App77>
      <App77 bg="bg-white">
        {petals.map((c, i) => (
          <rect key={c} x="29" y="5" width="19" height="31" rx="9.500" fill={c} fillOpacity="0.850" transform={`rotate(${i * 45} 38.500 38.500)`} />
        ))}
      </App77>
      <App77 bg="bg-linear-to-b from-[#8af584] to-[#55c24a]">
        <rect x="11" y="22" width="38" height="34" rx="8" fill="#f2f6f1" /><path d="M52 34l13-9q2-1 2 1v26q0 2-2 1l-13-9z" fill="#e6f2e4" />
      </App77>
      <div className="flex w-[104px] shrink-0 flex-col items-center">
        <div className="flex h-[77px] w-[77px] flex-col overflow-hidden rounded-[18px] bg-[#fafaf8] font-[Inter,sans-serif] shadow-[0_2px_3px_rgba(0,0,0,0.3)]">
          <div className="flex h-[25px] shrink-0 items-center justify-center bg-[#e2604f] text-[14px] font-semibold text-white">FEB</div>
          <div className="text-center text-[47px] leading-[48px] font-light tracking-[-2px] text-[#1d1d1d]">27</div>
        </div>
      </div>
      <App77>
        <rect x="68" y="11" width="11" height="16" rx="3" fill="#bfc2c4" /><rect x="68" y="26" width="11" height="16" rx="3" fill="#62b7ef" /><rect x="68" y="41" width="11" height="14" rx="3" fill="#f0943a" /><rect x="68" y="54" width="11" height="14" rx="3" fill="#6dd262" />
        <rect width="76" height="77" rx="17" fill="#a27d4b" /><path d="M6 5v67" stroke="#8a693c" strokeWidth="2" /><circle cx="40" cy="38" r="24" stroke="#7f6138" strokeWidth="2" /><circle cx="40" cy="33" r="9" fill="#86663b" /><path d="M23 54c4-9 30-9 34 0-8 10-26 10-34 0z" fill="#86663b" />
      </App77>
      <App77 bg="bg-white">
        {["#3d7ff0", "#e2503f", "#f0983a"].map((c, i) => (
          <g key={c}><circle cx="15" cy={19 + i * 19.500} r="5.800" stroke={c} strokeWidth="1.500" /><circle cx="15" cy={19 + i * 19.500} r="4" fill={c} /><path d={`M29 ${19 + i * 19.500}h40`} stroke="#bdbdbf" strokeWidth="1.500" /></g>
        ))}
      </App77>
      <App77 bg="bg-linear-to-b from-[#f7f6f4] to-[#e7e4de]">
        <path d="M0 0h77v20H0z" fill="#f8cf4b" /><path d="M2 23h73" stroke="#b9b6ae" strokeWidth="1.800" strokeDasharray="1.500 2" /><path d="M0 39h77M0 58h77" stroke="#cfcdc9" strokeWidth="1.500" />
      </App77>
      <App77 bg="bg-white">
        <circle cx="31" cy="47" r="22" fill="#ee7358" /><path d="M9 44a22 22 0 0 1 30-17l-6 16z" fill="#f5a94a" /><rect x="25" y="10" width="43" height="42" rx="4" fill="#59c4f0" fillOpacity="0.920" /><path d="M15 51c5-20 12-28 14-23 1 4-5 18-1 18 4 0 6-16 11-16 4 0-2 15 2 16s5-13 9-12c3 1 0 10 4 11s8-3 15-10" stroke="#173a64" strokeWidth="4" strokeLinecap="round" />
      </App77>
      <App77 bg="bg-linear-to-b from-[#2c3735] to-[#0c1012]">
        <g fill="#fff"><path d="M27 24c.2 3-2.500 6-5.500 6-.2-3 2.400-5.800 5.500-6zM32 34c-5 3-4 10 1 12-1 4-4 7.500-6.500 7.500-2 0-2.500-1-5-1s-3 1-5 1C12 53.500 9 31 21 31.500c1.500.2 2 .8 3.500.8 2 0 5.500-2 7.500 1.700z" /></g>
        <text x="36" y="51" fill="#fff" fontSize="29" fontFamily="Inter, sans-serif" fontWeight="500">tv</text>
      </App77>
      <App77>
        <path d="M39-7C28 13 24 30 23 45l5 22h22l5-22C54 30 50 13 39-7z" fill="#a7a9ab" /><path d="M39-7C34 13 34 50 36 67h14l5-22C54 30 50 13 39-7z" fill="#77797b" />
        <path d="M27 58c-5 6-5 17-2 27l4-9 4-8zM50 58c7 6 8 17 4 27l-4-9-4-8z" fill="#4b4c4e" /><path d="M33 66h12l-2 8h-8z" fill="#222" />
        <path d="M39 21c-8 0-8 3-8 7v3h9v2H28c-3 5-2 12 1 13h4v-4c0-4 3-6 6-6h6c4-3 4-15-6-15z" fill="#3a76ad" /><path d="M39 53c8 0 8-3 8-7v-3h-9v-2h12c3-4 2-9 0-10h-3v2c0 4-3 6-6 6h-6c-5 3-4 14 4 14z" fill="#f2cf4a" />
      </App77>
      <App77 bg="bg-linear-to-b from-[#ee6578] to-[#e63b46]">
        <path d="M27 19l30-7v39a8 7 0 1 1-4-6V25l-22 5v26a8 7 0 1 1-4-6z" fill="#fff" />
      </App77>
      <App77 bg="bg-linear-to-b from-[#4fb0f0] to-[#2a5fd9]">
        <path d="M43 16L24 48M34 16l22 40M14 48h30M54 48h10M20 55l-3 5" stroke="#fff" strokeWidth="6" strokeLinecap="round" />
      </App77>
      <App77 bg="bg-linear-to-b from-[#d6dadd] to-[#8e8c89]">
        <circle cx="38.500" cy="38.500" r="33" fill="#2e2f30" /><circle cx="38.500" cy="38.500" r="28" stroke="#8b8d8e" strokeWidth="4" strokeDasharray="1.800 1.500" /><circle cx="38.500" cy="38.500" r="22" stroke="#a5a7a8" strokeWidth="3.500" />
        <path d="M38.500 38.500h22M38.500 38.500l-12-19M38.500 38.500l-12 19" stroke="#a5a7a8" strokeWidth="3.500" /><circle cx="38.500" cy="38.500" r="5" fill="#6d6f70" />
      </App77>
      <App77>
        <path d="M-4-4h42c28 0 44 16 44 44S66 83 40 83-4 68-4 40z" fill="#f6f8fc" stroke="#46587c" strokeWidth="4" /><path d="M0 0l26 26-20 14z" fill="#cddaf2" />
        {teeth.map((a) => <path key={a} d="M31 15l2.500-9h10l2.500 9z" fill="#c4c7d2" stroke="#8f929f" strokeWidth="1.500" strokeLinejoin="round" transform={`rotate(${a} 38.500 36)`} />)}
        <circle cx="38.500" cy="36" r="23" fill="#c9ccd6" /><circle cx="38.500" cy="36" r="13" fill="#a9c0ee" stroke="#7d8190" strokeWidth="2.500" />
      </App77>
      <div className="mr-[20px] ml-[26px] h-[94px] w-[2px] -translate-y-[3px] bg-[#3c4b5a]/80" />
      <App77 dot bg="bg-[#df5144]">
        <path d="M30 19l21 20-21 20L9 39z" fill="#fff" /><path d="M42 21l5-3 22 21-22 21-5-3 17-18z" fill="#fff" />
      </App77>
      <App77 dot bg="bg-[#1f2021]">
        <rect x="1.500" y="1.500" width="74" height="74" rx="17" stroke="#bcc9d0" strokeWidth="2.500" /><rect x="6" y="5" width="65" height="66" rx="13" stroke="#000" strokeWidth="5" />
        <path d="M13 14l8 5.500-8 5.500M26 29h11" stroke="#fff" strokeWidth="2.400" />
      </App77>
      <App77 dot bg="bg-white">
        <rect x="2" y="2" width="73" height="73" rx="16" stroke="#ef9439" strokeWidth="4" /><path d="M50 50h27v27H50z" fill="#ef9439" /><path d="M60 55h-6v13h14v-6M60 62l8-9M63 53h6v6" stroke="#fff" strokeWidth="2.500" />
        <path d="M50 16L32 48" stroke="#ef9439" strokeWidth="7.500" strokeLinecap="round" /><circle cx="49.500" cy="17" r="2" fill="#fff" /><path d="M15 38l5 7" stroke="#ef9439" strokeWidth="6.500" strokeLinecap="round" /><path d="M19 64a9 9 0 0 1 7-15q7 0 9 7 0 7-5 10" stroke="#ef9439" strokeWidth="5" /><circle cx="25" cy="59" r="3.500" fill="#ef9439" />
      </App77>
      <div className="flex w-[104px] shrink-0 flex-col items-center">
        <svg width="97" height="97" viewBox="0 0 97 97" fill="none" className="my-[-10px] shrink-0 rounded-[18px]">
          <rect width="97" height="97" fill="#0b1280" /><path d="M0 4c14 2 24 7 28 14l16 27 12 13 2 14-4 25H0z" fill="#e04a3c" /><path d="M0 4c14 2 24 7 28 14l14 26C30 62 14 50 0 66z" fill="#f3a94a" /><path d="M0 4c14 2 24 7 27 14l2 16C18 40 8 34 0 40z" fill="#f9ea5c" /><path d="M20 0h77v34L51 50 28 14z" fill="#4fb57c" /><path d="M20 0h77v8L30 16z" fill="#2f7f7e" /><path d="M97 36v61H64L54 88l6-26z" fill="#6db3f2" />
          <path d="M70 21L49 60" stroke="#fff" strokeWidth="8" strokeLinecap="round" /><circle cx="70" cy="21" r="3" fill="#2f8f6a" /><path d="M28 48l5 8" stroke="#fff" strokeWidth="8" strokeLinecap="round" /><path d="M33 76a10 10 0 0 1 9-16q9 0 11 9-1 9-6 15" stroke="#fff" strokeWidth="6.500" /><circle cx="41" cy="75" r="4" fill="#fff" />
        </svg>
        <i className="mt-[17px] h-[8px] w-[8px] rounded-full bg-[#10161d]" />
      </div>
      <div className="mr-[20px] ml-[25px] h-[94px] w-[2px] -translate-y-[3px] bg-[#3c5f7e]/80" />
      <div className="-ml-[1px]">
        <App77>
          <path d="M5 3l9 73c1 8 48 8 49 0l9-73z" fill="#e9ebee" fillOpacity="0.930" /><ellipse cx="38.500" cy="4" rx="34" ry="8" fill="#c3cad1" stroke="#f2f4f6" strokeWidth="2" />
        </App77>
      </div>
    </div>
  );
}

export default function App() {
  return (
    <div className="relative flex h-[1800px] w-[2880px] flex-col gap-px overflow-hidden bg-[linear-gradient(90deg,#a5522f_0%,#8f4526_3%,#b95a34_14%,#c4582f_28%,#c96243_37%,#1f4b71_37.500%,#1f4d76_60%,#1c3f5e_75%,#0f2436_86%,#0b1824_100%)]">
      <MenuBar />
      <Window />
      <div className="mt-[-1px] flex flex-col bg-[linear-gradient(90deg,transparent_0_182px,#8b8b8b_182px_1082px,transparent_1082px)] bg-[length:2880px_6px] bg-no-repeat pt-[3px]"><Dock /></div>
    </div>
  );
}
